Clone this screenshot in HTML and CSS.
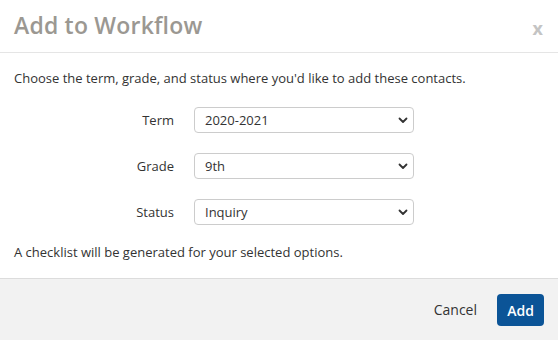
FILE: index.html
```html
<!DOCTYPE html>
<html>
<head>
<meta charset="utf-8">
<link rel="stylesheet" href="styles.css">
</head>
<body>
<div class="modal">
  <div class="modal-header">
    <h1 class="modal-title">Add to Workflow</h1>
    <button class="close">x</button>
  </div>
  <div class="modal-body">
    <p class="intro">Choose the term, grade, and status where you'd like to add these contacts.</p>
    <div class="form">
      <label class="label">Term</label>
      <div class="select-wrap">
        <select class="select"><option>2020-2021</option></select>
        <svg class="chev" width="10" height="7" viewBox="0 0 10 7"><path d="M1.5 1.5 L5 5 L8.5 1.5" fill="none" stroke="#333" stroke-width="1.8" stroke-linecap="round" stroke-linejoin="round"/></svg>
      </div>
      <label class="label">Grade</label>
      <div class="select-wrap">
        <select class="select"><option>9th</option></select>
        <svg class="chev" width="10" height="7" viewBox="0 0 10 7"><path d="M1.5 1.5 L5 5 L8.5 1.5" fill="none" stroke="#333" stroke-width="1.8" stroke-linecap="round" stroke-linejoin="round"/></svg>
      </div>
      <label class="label">Status</label>
      <div class="select-wrap">
        <select class="select"><option>Inquiry</option></select>
        <svg class="chev" width="10" height="7" viewBox="0 0 10 7"><path d="M1.5 1.5 L5 5 L8.5 1.5" fill="none" stroke="#333" stroke-width="1.8" stroke-linecap="round" stroke-linejoin="round"/></svg>
      </div>
    </div>
    <p class="note">A checklist will be generated for your selected options.</p>
  </div>
  <div class="modal-footer">
    <button class="btn-cancel">Cancel</button>
    <button class="btn-add">Add</button>
  </div>
</div>
</body>
</html>
```

FILE: styles.css
```css
* { box-sizing: border-box; }
html, body { margin: 0; padding: 0; background: #fff; }
body {
  font-family: "Open Sans", "Noto Sans", sans-serif;
  color: #333;
  width: 558px;
  height: 340px;
  overflow: hidden;
}
.modal { width: 558px; height: 340px; display: flex; flex-direction: column; }
.modal-header {
  height: 53px;
  border-bottom: 1px solid #e5e5e5;
  display: flex;
  align-items: center;
  justify-content: space-between;
  padding: 0 14px 0 14px;
}
.modal-title {
  margin: 0;
  font-size: 23px;
  font-weight: 600;
  color: #9b9892;
  letter-spacing: 0.2px;
  line-height: 1;
  padding-bottom: 2px;
}
.close {
  border: 0;
  background: none;
  font-family: "Open Sans", sans-serif;
  font-size: 18px;
  font-weight: 700;
  color: #c4c4c4;
  padding: 0;
  margin-top: 4px;
  margin-right: 1px;
  line-height: 1;
}
.modal-body { padding: 15px 14px 16px 14px; }
.intro { margin: 0; font-size: 13px; line-height: 20px; }
.form {
  display: grid;
  grid-template-columns: 160px 220px;
  column-gap: 20px;
  row-gap: 20px;
  margin-top: 19px;
  align-items: center;
}
.label { text-align: right; font-size: 13px; }
.select-wrap { position: relative; height: 26px; }
.select {
  appearance: none;
  -webkit-appearance: none;
  width: 220px;
  height: 26px;
  border: 1px solid #cccccc;
  border-radius: 4px;
  background: #fff;
  font-family: "Open Sans", sans-serif;
  font-size: 13px;
  color: #333;
  padding: 0 24px 0 10px;
  margin: 0;
}
.chev { position: absolute; right: 6px; top: 10px; pointer-events: none; }
.note { margin: 17px 0 0 0; font-size: 13px; line-height: 20px; }
.modal-footer {
  flex: 1;
  background: #f2f2f2;
  border-top: 1px solid #dcdcdc;
  display: flex;
  align-items: center;
  justify-content: flex-end;
  padding: 0 14px 0 14px;
  gap: 8px;
}
.btn-cancel {
  border: 0;
  background: none;
  font-family: "Open Sans", sans-serif;
  font-size: 14px;
  font-weight: 500;
  color: #333;
  padding: 0 12px;
  height: 32px;
}
.btn-add {
  border: 0;
  background: #0b5497;
  color: #fff;
  border-radius: 4px;
  font-family: "Open Sans", sans-serif;
  font-size: 14px;
  font-weight: 600;
  width: 47px;
  height: 32px;
  padding: 0;
  margin-top: 1px;
}
```
